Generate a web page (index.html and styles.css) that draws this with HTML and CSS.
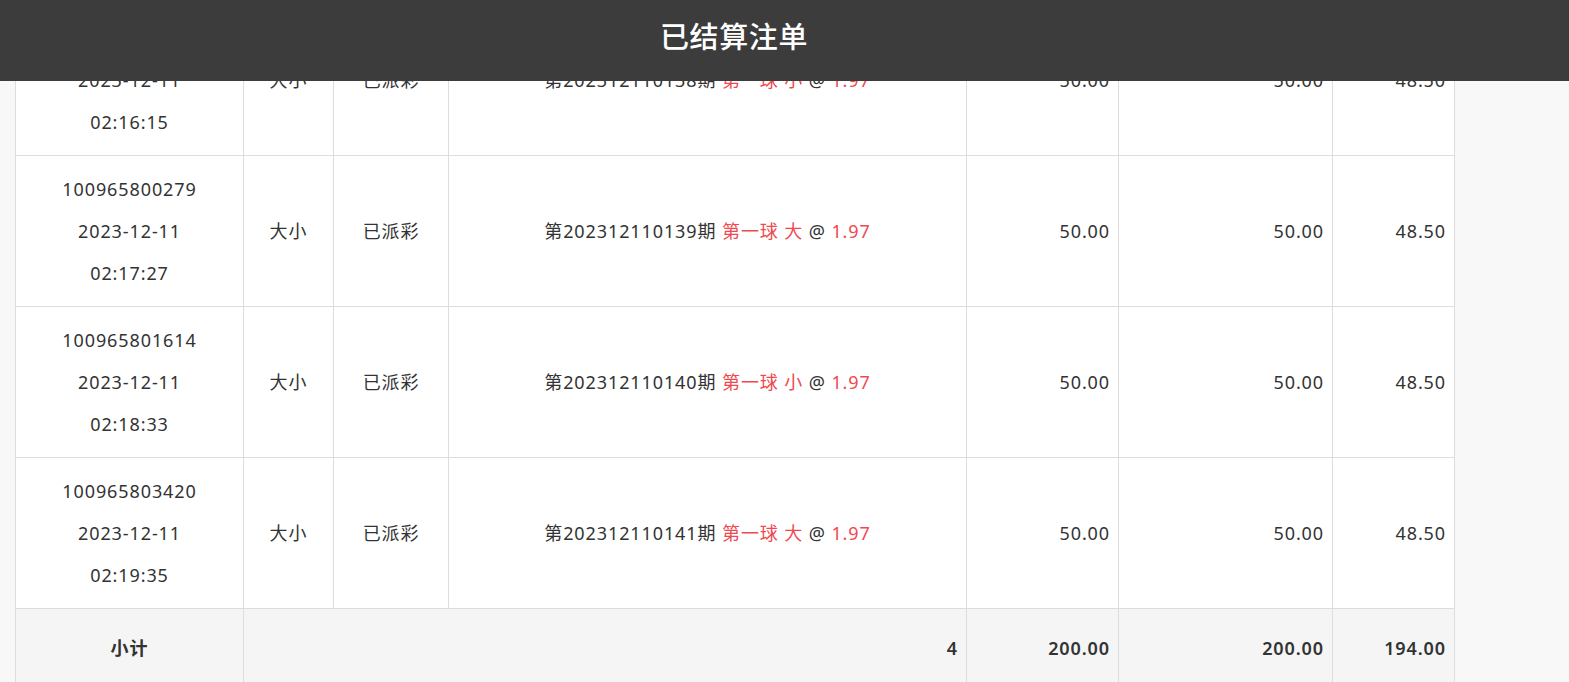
FILE: index.html
```html
<!DOCTYPE html>
<html lang="zh-CN">
<head>
<meta charset="utf-8">
<title>已结算注单</title>
<link rel="stylesheet" href="styles.css">
</head>
<body>
<header class="topbar">
  <div class="topbar-inner"><h1 class="title">已结算注单</h1></div>
</header>
<main class="content">
  <table class="bets">
    <colgroup>
      <col class="c-id"><col class="c-type"><col class="c-status"><col class="c-detail">
      <col class="c-amt"><col class="c-valid"><col class="c-win">
    </colgroup>
    <tbody>
      <tr>
        <td class="center">100965798942<br>2023-12-11<br>02:16:15</td>
        <td class="center">大小</td>
        <td class="center">已派彩</td>
        <td class="center">第202312110138期 <span class="red">第一球 小</span> @ <span class="red">1.97</span></td>
        <td class="num">50.00</td>
        <td class="num">50.00</td>
        <td class="num">48.50</td>
      </tr>
      <tr>
        <td class="center">100965800279<br>2023-12-11<br>02:17:27</td>
        <td class="center">大小</td>
        <td class="center">已派彩</td>
        <td class="center">第202312110139期 <span class="red">第一球 大</span> @ <span class="red">1.97</span></td>
        <td class="num">50.00</td>
        <td class="num">50.00</td>
        <td class="num">48.50</td>
      </tr>
      <tr>
        <td class="center">100965801614<br>2023-12-11<br>02:18:33</td>
        <td class="center">大小</td>
        <td class="center">已派彩</td>
        <td class="center">第202312110140期 <span class="red">第一球 小</span> @ <span class="red">1.97</span></td>
        <td class="num">50.00</td>
        <td class="num">50.00</td>
        <td class="num">48.50</td>
      </tr>
      <tr>
        <td class="center">100965803420<br>2023-12-11<br>02:19:35</td>
        <td class="center">大小</td>
        <td class="center">已派彩</td>
        <td class="center">第202312110141期 <span class="red">第一球 大</span> @ <span class="red">1.97</span></td>
        <td class="num">50.00</td>
        <td class="num">50.00</td>
        <td class="num">48.50</td>
      </tr>
      <tr class="subtotal">
        <td class="center">小计</td>
        <td class="num" colspan="3">4</td>
        <td class="num">200.00</td>
        <td class="num">200.00</td>
        <td class="num">194.00</td>
      </tr>
    </tbody>
  </table>
</main>
</body>
</html>
```
FILE: styles.css
```css
html, body {
  margin: 0;
  padding: 0;
}
body {
  background: #f8f8f8;
  color: #333;
  font-family: "Noto Sans", "Noto Sans CJK SC", sans-serif;
  font-size: 18px;
  letter-spacing: 0.9px;
}
.topbar {
  position: fixed;
  top: 0;
  left: 0;
  right: 0;
  height: 81px;
  background: #3c3c3c;
  z-index: 10;
}
.topbar-inner {
  width: 1468px;
  text-align: center;
}
.title {
  margin: 0;
  padding-top: 17px;
  line-height: 40px;
  font-size: 29px;
  font-weight: 500;
  letter-spacing: 0.6px;
  color: #fff;
}
.content {
  padding: 4px 15px 0;
}
.bets {
  width: 1440px;
  table-layout: fixed;
  border-collapse: collapse;
  background: #fff;
}
.c-id { width: 228px; }
.c-type { width: 90px; }
.c-status { width: 115px; }
.c-detail { width: 518px; }
.c-amt { width: 152px; }
.c-valid { width: 214px; }
.c-win { width: 122px; }
.bets td {
  border: 1px solid #dddddd;
  padding: 12px 10px;
  line-height: 42px;
  vertical-align: middle;
  white-space: nowrap;
}
.bets td.center { text-align: center; }
.bets td.num {
  text-align: right;
  padding-right: 8px;
}
.red { color: #f0494f; }
.subtotal td {
  background: #f5f5f5;
  font-weight: 600;
  padding-top: 18px;
  padding-bottom: 18px;
}
```
